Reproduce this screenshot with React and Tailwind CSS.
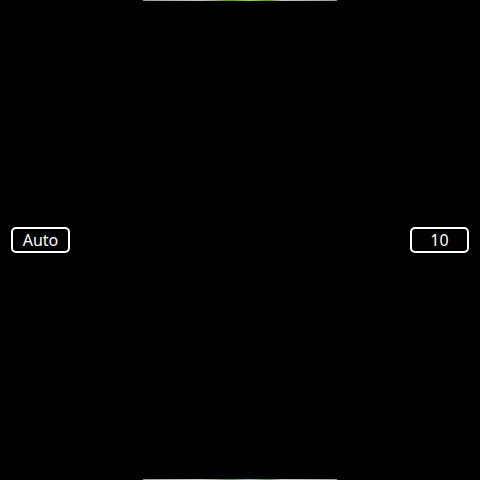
import React from 'react';

const EdgeLine = () => (
    <div className="flex justify-center">
        <div className="h-px w-[194px] bg-[linear-gradient(to_right,#9a9a9a_0%,#c8c8c8_30%,#5f8f3a_45%,#9fd46a_55%,#5f8f3a_65%,#c8c8c8_72%,#9a9a9a_100%)]" />
    </div>
);

const Pill = ({ label }) => (
    <div className="flex h-[26px] w-[59px] items-center justify-center rounded-[5px] border-2 border-white text-[16px] text-white">
        {label}
    </div>
);

export default function App() {
    return (
        <div className="flex h-[480px] w-[480px] flex-col bg-black font-['Noto_Sans',sans-serif]">
            <EdgeLine />
            <div className="flex flex-1 items-center justify-between px-[11px]">
                <Pill label="Auto" />
                <Pill label="10" />
            </div>
            <EdgeLine />
        </div>
    );
}
